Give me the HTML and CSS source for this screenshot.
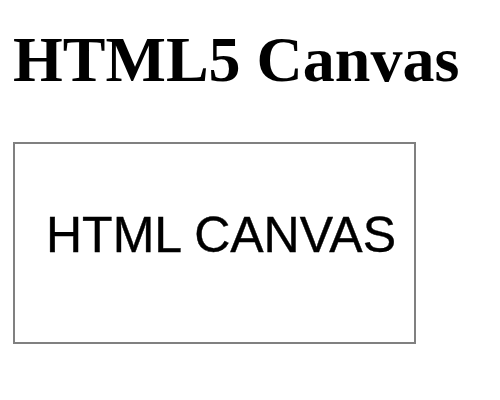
FILE: index.html
```html
<!DOCTYPE html>
<html>
<head>
<meta charset="utf-8">
<link rel="stylesheet" href="styles.css">
</head>
<body>
<div class="page">
  <h1 class="title">HTML5 Canvas</h1>
  <div class="canvas">
    <div class="canvas-text">HTML CANVAS</div>
  </div>
</div>
</body>
</html>
```
FILE: styles.css
```css
html, body {
  margin: 0;
  padding: 0;
  background: #ffffff;
}
.page {
  display: flex;
  flex-direction: column;
  align-items: flex-start;
  padding: 28px 13px 0 13px;
  gap: 50px;
}
.title {
  margin: 0;
  font-family: "Liberation Serif", "Times New Roman", serif;
  font-weight: bold;
  font-size: 64px;
  line-height: 64px;
  color: #000;
}
.canvas {
  width: 399px;
  height: 198px;
  border: 2px solid #808080;
  box-sizing: content-box;
  background: #fff;
}
.canvas-text {
  padding: 66px 0 0 31px;
  font-family: "Liberation Sans", Arial, sans-serif;
  font-size: 50px;
  line-height: 50px;
  color: #000;
  -webkit-text-stroke: 0.4px #000;
  filter: blur(0.4px);
}
```
